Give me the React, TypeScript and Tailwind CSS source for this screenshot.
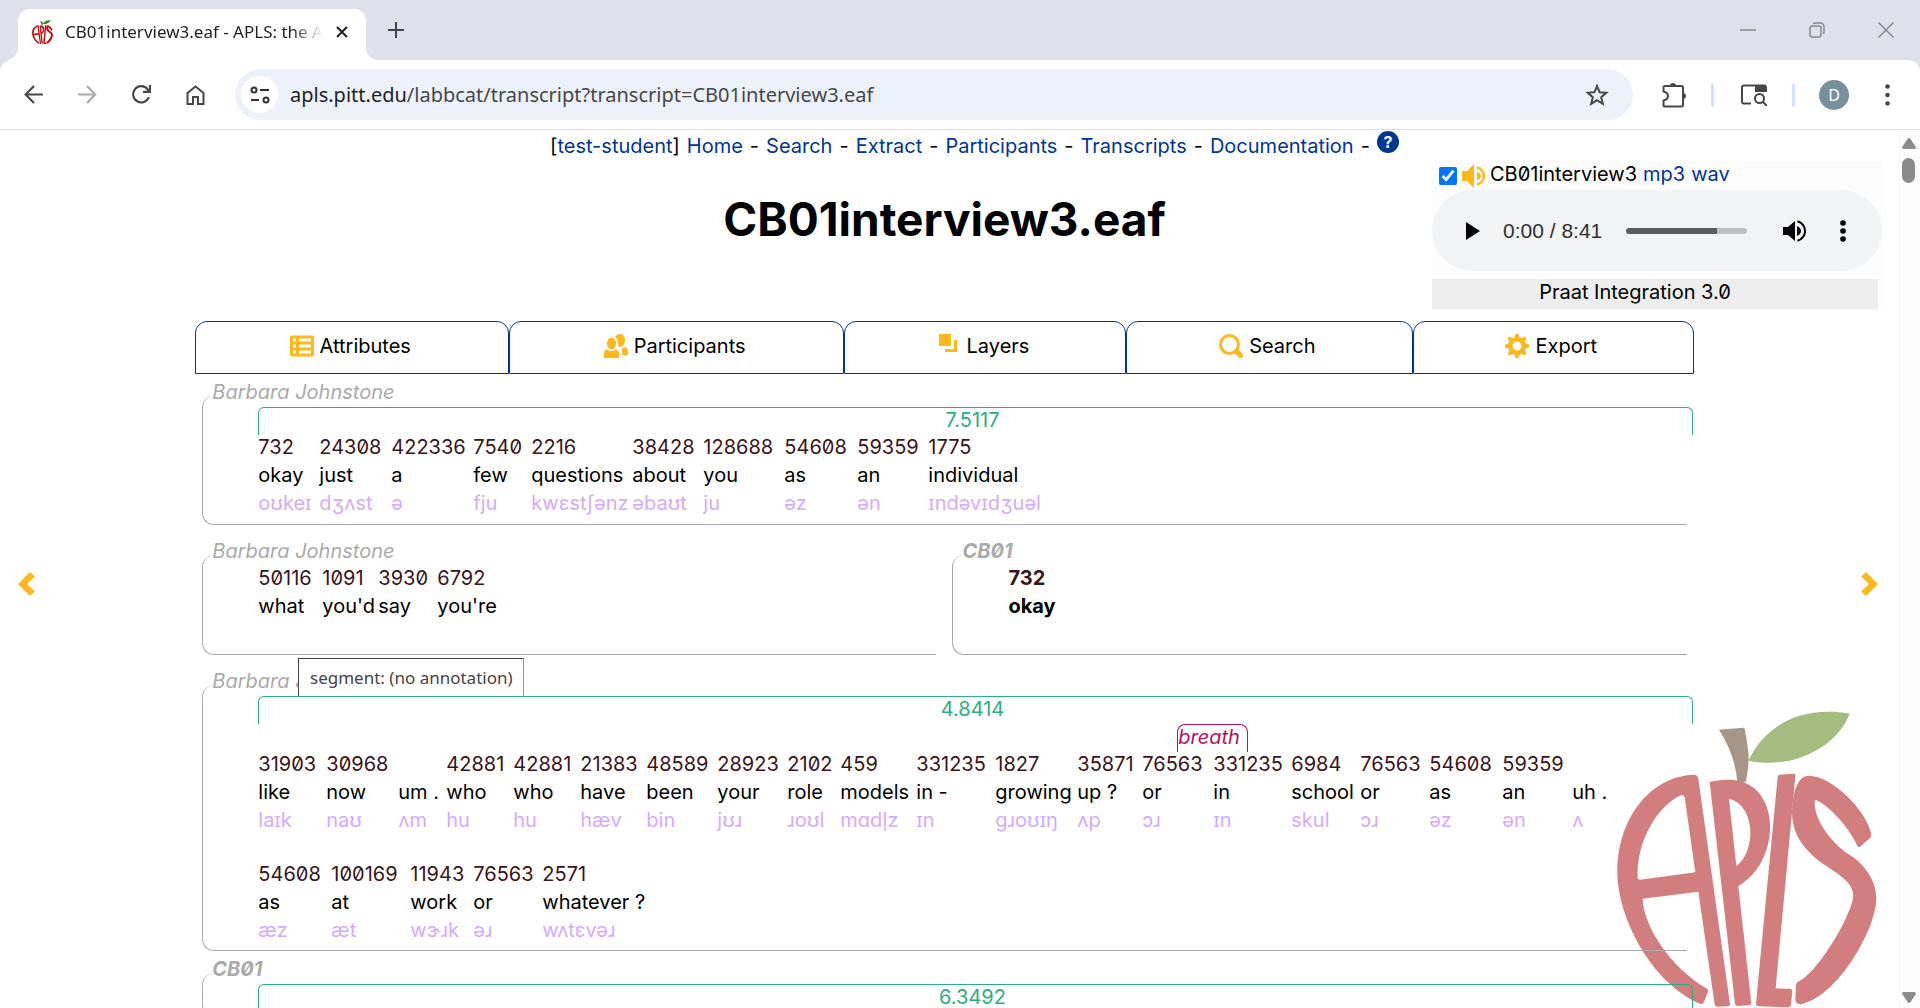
import React from "react";

type Word = { w: number; freq?: string; text: string; ipa?: string };

const TURN_ONE: Word[] = [
  { w: 61, freq: "732", text: "okay", ipa: "oʊkeɪ" },
  { w: 72, freq: "24308", text: "just", ipa: "dʒʌst" },
  { w: 82, freq: "422336", text: "a", ipa: "ə" },
  { w: 58, freq: "7540", text: "few", ipa: "fju" },
  { w: 101, freq: "2216", text: "questions", ipa: "kwɛstʃənz" },
  { w: 71, freq: "38428", text: "about", ipa: "əbaʊt" },
  { w: 81, freq: "128688", text: "you", ipa: "ju" },
  { w: 73, freq: "54608", text: "as", ipa: "əz" },
  { w: 71, freq: "59359", text: "an", ipa: "ən" },
  { w: 118, freq: "1775", text: "individual", ipa: "ɪndəvɪdʒuəl" },
];

const TURN_TWO: Word[] = [
  { w: 64, freq: "50116", text: "what" },
  { w: 56, freq: "1091", text: "you'd" },
  { w: 59, freq: "3930", text: "say" },
  { w: 59, freq: "6792", text: "you're" },
];

const TURN_THREE_A: Word[] = [
  { w: 68, freq: "31903", text: "like", ipa: "laɪk" },
  { w: 72, freq: "30968", text: "now", ipa: "naʊ" },
  { w: 48, text: "um .", ipa: "ʌm" },
  { w: 67, freq: "42881", text: "who", ipa: "hu" },
  { w: 67, freq: "42881", text: "who", ipa: "hu" },
  { w: 66, freq: "21383", text: "have", ipa: "hæv" },
  { w: 71, freq: "48589", text: "been", ipa: "bin" },
  { w: 70, freq: "28923", text: "your", ipa: "jʊɹ" },
  { w: 53, freq: "2102", text: "role", ipa: "ɹoʊl" },
  { w: 76, freq: "459", text: "models", ipa: "mɑdl̩z" },
  { w: 79, freq: "331235", text: "in -", ipa: "ɪn" },
  { w: 82, freq: "1827", text: "growing", ipa: "ɡɹoʊɪŋ" },
  { w: 65, freq: "35871", text: "up ?", ipa: "ʌp" },
  { w: 71, freq: "76563", text: "or", ipa: "ɔɹ" },
  { w: 78, freq: "331235", text: "in", ipa: "ɪn" },
  { w: 69, freq: "6984", text: "school", ipa: "skul" },
  { w: 69, freq: "76563", text: "or", ipa: "ɔɹ" },
  { w: 73, freq: "54608", text: "as", ipa: "əz" },
  { w: 70, freq: "59359", text: "an", ipa: "ən" },
  { w: 36, text: "uh .", ipa: "ʌ" },
];

const TURN_THREE_B: Word[] = [
  { w: 73, freq: "54608", text: "as", ipa: "æz" },
  { w: 79, freq: "100169", text: "at", ipa: "æt" },
  { w: 63, freq: "11943", text: "work", ipa: "wɝɹk" },
  { w: 69, freq: "76563", text: "or", ipa: "əɹ" },
  { w: 105, freq: "2571", text: "whatever ?", ipa: "wʌtɛvəɹ" },
];

function Words({ words, bold = false }: { words: Word[]; bold?: boolean }) {
  return (
    <div className={bold ? "flex whitespace-nowrap font-bold" : "flex whitespace-nowrap"}>
      {words.map((word, i) => (
        <div key={i} className="flex shrink-0 flex-col leading-7" style={{ width: word.w }}>
          <span className="h-7 text-[#3a1420]">{word.freq}</span>
          <span className="h-7 text-black">{word.text}</span>
          <span className="h-7 text-[#d5aaff]">{word.ipa}</span>
        </div>
      ))}
    </div>
  );
}

function Span({ value }: { value: string }) {
  return (
    <div className="-mr-1.5 h-[26px]">
      <div className="h-7 rounded-t-md border border-b-0 border-[#2aaf80] pr-1.5 text-center leading-6 text-[#2aaf80]">{value}</div>
    </div>
  );
}

function Turn({ speaker, bold = false, gap = "mt-3.5", pad = "pt-[11px] pb-1.5", children }: { speaker: string; bold?: boolean; gap?: string; pad?: string; children: React.ReactNode }) {
  return (
    <section className={gap}>
      <h2 className={bold ? "h-6 pl-2.5 font-bold italic leading-6 text-[#aaa]" : "h-6 pl-2.5 italic leading-6 text-[#aaa]"}>{speaker}</h2>
      <div className={"-mt-2 rounded-l-xl border-b border-l border-[#a9a9a9] pl-[55px] " + pad}>{children}</div>
    </section>
  );
}

function AppleLogo({ className, vivid = false }: { className: string; vivid?: boolean }) {
  const red = vivid ? "#c00d0d" : "#d37e7e";
  return (
    <svg viewBox="170 90 780 894" className={className} aria-hidden="true">
      <path fill={vivid ? "#5b3a22" : "#a79587"} d="M476 149L548 143Q552 143 553 147Q565 205 565 240Q563 275 557 303Q556 307 551 307L531 307Q525 225 476 149Z" />
      <path fill={vivid ? "#4d8a12" : "#a3bd81"} d="M564 242C610 145 710 75 868 101C830 200 700 270 564 242Z" />
      <path fill={red} fillRule="evenodd" d="M400 284Q412 284 414 296L509 972Q510 978 502 979L470 980Q464 980 463 973L414 635L247 656C250 740 330 860 438 925Q445 928 443 934L431 966Q427 975 418 971C270 905 171 710 171 575C171 420 265 290 400 284ZM362 346C295 375 228 480 232 592Q232 600 240 599L405 577L373 352Q371 344 362 346Z" />
      <path fill={red} fillRule="evenodd" d="M448 306C540 285 590 315 615 370C650 450 620 570 534 618L573 969Q573 976 566 976L532 978Q525 978 524 971ZM506 356L528 559C590 510 585 375 506 356Z" />
      <path fill={red} d="M657 284L699 281Q706 281 705 289L646 925L690 926Q697 927 696 935L692 974Q690 982 682 982L594 979Q586 978 587 970L652 291Q653 285 657 284Z" />
      <path fill={red} d="M745 287C815 287 918 390 933 462Q934 469 929 474L899 500Q894 503 891 497C860 430 800 375 767 359Q763 360 763 368C763 420 810 485 865 523C915 553 948 605 948 655C948 745 835 945 728 971Q705 976 705 958L707 914Q708 907 716 904C775 875 878 700 879 645C876 590 790 565 750 520C715 485 695 445 695 395C697 330 715 287 745 287Z" />
    </svg>
  );
}

const tabIcons: Record<string, React.ReactNode> = {
  Attributes: (
    <svg viewBox="0 0 24 24" className="size-6 fill-[#ffb81c]">
      <path fillRule="evenodd" d="M2 1.500h20q2 0 2 2v17q0 2-2 2H2q-2 0-2-2v-17q0-2 2-2zM3 4.500v3h3v-3zm6 0v3h12v-3zM3 10.500v3h3v-3zm6 0v3h12v-3zM3 16.500v3h3v-3zm6 0v3h12v-3z" />
    </svg>
  ),
  Participants: (
    <svg viewBox="0 0 24 24" className="size-6 fill-[#ffb81c]">
      <ellipse cx="7.500" cy="9.500" rx="4.500" ry="6" />
      <path d="M0 24v-5q0-3 3-3.500q4 3 9 0q3 .5 3 3.500v5z" />
      <path d="M11 3q2-3.500 6-3q4 1 4 6q0 5-4 7q-2 0-3-1q1-6-3-9zM17 15q2 0 3-2q4 1 4 3v5h-6q1-4-1-6z" />
    </svg>
  ),
  Layers: (
    <svg viewBox="0 0 24 24" className="size-6 fill-[#ffb81c]">
      <path d="M2 0h12v12H2zM17 6h3v12H8v-3h9z" />
    </svg>
  ),
  Search: (
    <svg viewBox="0 0 24 24" className="size-6 fill-none stroke-[#ffb81c]">
      <circle cx="10.500" cy="10.500" r="9" strokeWidth="3" />
      <path d="M17.500 17.500l4 4" strokeWidth="5" strokeLinecap="round" />
    </svg>
  ),
  Export: (
    <svg viewBox="0 0 24 24" className="size-6 fill-[#ffb81c]">
      <path fillRule="evenodd" d="M9.500 3.300L10.500 0h3l1 3.300l2 .9l3-1.700l2 2l-1.700 3l.9 2l3.300 1v3l-3.300 1l-.9 2l1.700 3l-2 2l-3-1.700l-2 .9l-1 3.300h-3l-1-3.300l-2-.9l-3 1.700l-2-2l1.700-3l-.9-2L0 13.500v-3l3.300-1l.9-2l-1.700-3l2-2l3 1.700zM12 7.500a4.500 4.500 0 1 0 0 9a4.500 4.500 0 1 0 0-9z" />
    </svg>
  ),
};

function BrowserChrome() {
  return (
    <header className="shrink-0 bg-[#dee1e9] font-['Noto_Sans',sans-serif]">
      <div className="flex h-[60px] items-end justify-between">
        <div className="flex items-end pl-1">
          <svg viewBox="0 0 14 14" className="size-3.5 fill-white"><path d="M14 0v14H0Q14 14 14 0z" /></svg>
          <div className="flex h-[51px] w-[348px] items-center rounded-t-xl bg-white pb-1.5 pl-3.5 pr-[18px]">
            <AppleLogo vivid className="h-6 w-[21px] shrink-0" />
            <div className="ml-3 whitespace-nowrap text-[17px] text-[#1f1f1f] [mask-image:linear-gradient(to_right,black_88%,transparent_100%)]">CB01interview3.eaf - APLS: the A</div>
            <button aria-label="Close tab" className="ml-auto">
              <svg viewBox="0 0 12 12" className="size-3 stroke-[#1f1f1f]" strokeWidth="2"><path d="M1 1l10 10M11 1L1 11" /></svg>
            </button>
          </div>
          <svg viewBox="0 0 14 14" className="size-3.5 fill-white"><path d="M0 0v14h14Q0 14 0 0z" /></svg>
          <button aria-label="New tab" className="mb-[22px] ml-2">
            <svg viewBox="0 0 16 16" className="size-4 stroke-[#444]" strokeWidth="2"><path d="M8 0v16M0 8h16" /></svg>
          </button>
        </div>
        <div className="mb-[22px] flex items-center gap-[53px] pr-[26px]">
          <button aria-label="Minimize"><svg viewBox="0 0 16 16" className="size-4 stroke-[#888]" strokeWidth="1.500"><path d="M0 8h16" /></svg></button>
          <button aria-label="Restore"><svg viewBox="0 0 16 16" className="size-4 fill-none stroke-[#888]" strokeWidth="1.500"><rect x="1" y="4" width="11" height="11" rx="2" /><path d="M4 1.500Q5 1 7 1h4q4 0 4 4v4q0 2-.6 3" /></svg></button>
          <button aria-label="Close"><svg viewBox="0 0 16 16" className="size-4 stroke-[#888]" strokeWidth="1.500"><path d="M.5.5l15 15M15.500.5l-15 15" /></svg></button>
        </div>
      </div>
      <div className="flex h-[70px] items-center rounded-t-xl border-b border-[#dcdcdc] bg-white pl-6 pr-[30px]">
        <div className="flex items-center gap-[35px]">
          <button aria-label="Back"><svg viewBox="0 0 18 18" className="size-[19px] fill-none stroke-[#474747]" strokeWidth="2"><path d="M18 9H1.500M9.500 1L1.500 9l8 8" /></svg></button>
          <button aria-label="Forward"><svg viewBox="0 0 18 18" className="size-[19px] fill-none stroke-[#aaa]" strokeWidth="2"><path d="M0 9h16.500M8.500 1l8 8l-8 8" /></svg></button>
          <button aria-label="Reload"><svg viewBox="0 0 18 18" className="size-[19px] fill-none stroke-[#474747]" strokeWidth="2"><path d="M16 11.500A7.700 7.700 0 1 1 14.800 4L17 6.200M17 0v6.500h-6.500" /></svg></button>
          <button aria-label="Home"><svg viewBox="0 0 18 20" className="h-5 w-[19px] fill-none stroke-[#474747]" strokeWidth="2"><path d="M1 8L9 1.500L17 8v11h-5.500v-7h-5v7H1z" /></svg></button>
        </div>
        <div className="ml-[30px] flex h-[51px] min-w-0 flex-1 items-center rounded-full bg-[#ecf1fa] pl-1.5 pr-6">
          <button aria-label="Site information" className="flex size-[37px] shrink-0 items-center justify-center rounded-full bg-white">
            <svg viewBox="0 0 20 18" className="h-[18px] w-5 fill-none stroke-[#303030]" strokeWidth="2"><circle cx="4" cy="4" r="2.500" /><path d="M10 4h9M1 14h8" /><circle cx="16" cy="14" r="2.500" /></svg>
          </button>
          <div className="ml-3 flex-1 text-[20px] text-[#474747]"><span className="text-[#1f1f1f]">apls.pitt.edu</span>/labbcat/transcript?transcript=CB01interview3.eaf</div>
          <button aria-label="Bookmark"><svg viewBox="0 0 24 24" className="size-6 fill-none stroke-[#474747]" strokeWidth="2"><path d="M12 3l2.600 6.300l6.700.5l-5.100 4.400l1.600 6.600L12 17.200l-5.800 3.600l1.600-6.600l-5.100-4.400l6.700-.5z" /></svg></button>
        </div>
        <div className="ml-[29px] flex items-center">
          <button aria-label="Extensions"><svg viewBox="0 0 25 26" className="h-[26px] w-[25px] fill-none stroke-[#474747]" strokeWidth="2"><path d="M1.500 5Q1.500 4 3 4h16.500q1.500 0 1.500 1.500V23q0 1.500-1.500 1.500H3q-1.500 0-1.500-1.500v-4.500Q6 17.500 6 14t-4.500-4.500z" /><path className="fill-[#474747] stroke-none" d="M8 4a3 3 0 0 1 6 0zM21 11a3 3 0 0 1 0 6z" /></svg></button>
          <span className="ml-6 h-6 w-[3px] rounded-full bg-[#d3e3fd]" />
          <button aria-label="Search this page" className="ml-[27px]"><svg viewBox="0 0 26 22" className="h-[22px] w-[26px] fill-none stroke-[#474747]" strokeWidth="2"><path d="M10 19.500H3q-2 0-2-2v-14Q1 1.500 3 1.500h20q2 0 2 2V8M21.500 17.500L26 22" /><path className="fill-[#474747] stroke-none" d="M14 1h11v7H14z" /><circle cx="18.500" cy="14.500" r="4.500" /></svg></button>
          <span className="ml-[25px] h-6 w-[3px] rounded-full bg-[#d3e3fd]" />
          <button aria-label="Profile" className="ml-6 flex size-[30px] items-center justify-center rounded-full bg-[#78909c] text-base text-white">D</button>
          <button aria-label="Menu" className="ml-9"><svg viewBox="0 0 5 22" className="h-[22px] w-[5px] fill-[#474747]"><circle cx="2.500" cy="2.500" r="2.300" /><circle cx="2.500" cy="11" r="2.300" /><circle cx="2.500" cy="19.500" r="2.300" /></svg></button>
        </div>
      </div>
    </header>
  );
}

function MediaPanel() {
  return (
    <aside className="absolute right-[15px] top-[31px] w-[450px] bg-[#fcfcfc] pb-px">
      <div className="flex h-[29px] items-center pl-[7px]">
        <input id="media" type="checkbox" defaultChecked className="size-[18px] accent-[#0075ff]" />
        <svg viewBox="0 0 24 24" className="ml-[5px] size-6 fill-[#ffb81c]"><path d="M0 7h5L12 0v24L5 17H0zM15 8q4 1 4 4t-4 4z" /><path d="M15 3.500a8.700 8.700 0 0 1 0 17" fill="none" stroke="#ffb81c" strokeWidth="2.500" /></svg>
        <div className="flex gap-1.5 pb-1 pl-1 leading-6">
          <label htmlFor="media">CB01interview3</label>
          <a href="#mp3" className="text-[#003594]">mp3</a>
          <a href="#wav" className="text-[#003594]">wav</a>
        </div>
      </div>
      <div className="flex h-[81px] items-center rounded-full bg-[#f1f3f4] pl-[34px] pr-9 font-['Liberation_Sans',sans-serif] text-[#303030]">
        <button aria-label="Play"><svg viewBox="0 0 14 18" className="h-[18px] w-3.5 fill-black"><path d="M0 0l14 9l-14 9z" /></svg></button>
        <span className="ml-[23px] text-[21px]">0:00 / 8:41</span>
        <input type="range" aria-label="Volume" defaultValue={75} className="ml-auto mr-9 h-1.5 w-[121px] appearance-none rounded-full bg-linear-to-r from-[#5a5a5a] from-75% to-[#c0c0c0] to-75% [&::-webkit-slider-thumb]:size-0 [&::-webkit-slider-thumb]:appearance-none" />
        <button aria-label="Mute"><svg viewBox="0 0 24 22" className="h-[22px] w-6 fill-black"><path d="M0 7h5l7-6v20l-7-6H0zM14 6q4 2 4 5t-4 5z" /><path d="M14.500 1.300a10 10 0 0 1 0 19.400" fill="none" stroke="#000" strokeWidth="2" /></svg></button>
        <button aria-label="More options" className="ml-[33px]"><svg viewBox="0 0 6 22" className="h-[22px] w-1.5"><circle cx="3" cy="3" r="2.800" /><circle cx="3" cy="11" r="2.800" /><circle cx="3" cy="19" r="2.800" /></svg></button>
      </div>
      <div className="mr-1 mt-2 h-[30px] bg-[#ededed] pr-10 text-center leading-[26px]">Praat Integration 3.0</div>
    </aside>
  );
}

export default function App() {
  return (
    <div className="flex h-screen flex-col overflow-hidden bg-white">
      <BrowserChrome />
      <div className="flex min-h-0 flex-1">
        <main className="relative min-w-0 flex-1 overflow-hidden pl-2 pr-4 font-['Inter','Noto_Sans',sans-serif] text-[20px] text-black [font-feature-settings:'zero']">
          <AppleLogo className="absolute bottom-0 right-5 w-[260px]" />
          <div className="relative">
            <nav className="flex h-8 items-center justify-center gap-[7px] whitespace-nowrap pl-[60px]">
              <span>[<a href="#user" className="text-[#003594]">test-student</a>]</span>
              {["Home", "Search", "Extract", "Participants", "Transcripts", "Documentation"].map((item) => (
                <React.Fragment key={item}>
                  <a href={"#" + item} className="text-[#003594]">{item}</a>
                  {" "}<span>-</span>
                </React.Fragment>
              ))}
              <a href="#help" aria-label="Help" className="mb-2 flex size-[22px] items-center justify-center rounded-full bg-[#003594] text-base font-bold text-white">?</a>
            </nav>
            <h1 className="mt-[31px] text-center text-[46px] font-bold leading-[52px] [font-feature-settings:'zero'_0]">CB01interview3.eaf</h1>
            <div className="mx-auto mt-[76px] w-4/5">
              <nav className="grid grid-cols-[314fr_335fr_282fr_287fr_281fr]">
                {Object.keys(tabIcons).map((tab) => (
                  <button key={tab} className="flex h-[53px] justify-center gap-1.5 rounded-t-xl border border-[#003594] pr-1 pt-3">
                    {tabIcons[tab]}
                    <span className="leading-6">{tab}</span>
                  </button>
                ))}
              </nav>
              <div className="mx-[7px]">
                <Turn speaker="Barbara Johnstone" gap="mt-1.5" pad="pt-[11px] pb-[7px]">
                  <Span value="7.5117" />
                  <Words words={TURN_ONE} />
                </Turn>
                <div className="grid grid-cols-2 gap-4">
                  <Turn speaker="Barbara Johnstone" pad="pt-[9px] pb-1.5"><Words words={TURN_TWO} /></Turn>
                  <Turn speaker="CB01" bold pad="pt-[9px] pb-1.5"><Words bold words={[{ w: 60, freq: "732", text: "okay" }]} /></Turn>
                </div>
                <div className="relative">
                  <Turn speaker="Barbara Johnstone">
                    <Span value="4.8414" />
                    <div className="flex h-7 pl-[919px] pt-0.5">
                      <div className="h-7 w-[71px] shrink-0 rounded-t-lg border border-b-0 border-[#b70f5a] italic leading-6 text-[#b70f5a]">breath</div>
                    </div>
                    <Words words={TURN_THREE_A} />
                    <div className="pt-[26px]"><Words words={TURN_THREE_B} /></div>
                  </Turn>
                  <div role="tooltip" className="absolute -top-[11px] left-[96px] h-[38px] w-[226px] border border-b-0 border-[#444] border-r-[#999] bg-white text-center font-['Noto_Sans',sans-serif] text-[17px] leading-[37px] text-[#444]">segment: (no annotation)</div>
                </div>
                <Turn speaker="CB01" bold gap="mt-1.5">
                  <Span value="6.3492" />
                </Turn>
              </div>
            </div>
          </div>
          <button aria-label="Previous" className="absolute left-[18px] top-[442px]"><svg viewBox="0 0 17 24" className="h-6 w-[17px] fill-[#ffb81c]"><path d="M12 0l5 4.500L9 12l8 7.500L12 24L0 12z" /></svg></button>
          <button aria-label="Next" className="absolute right-[19px] top-[442px]"><svg viewBox="0 0 17 24" className="h-6 w-[17px] fill-[#ffb81c]"><path d="M5 0L0 4.500L8 12L0 19.500L5 24L17 12z" /></svg></button>
          <MediaPanel />
        </main>
        <div className="flex w-[23px] flex-col items-center justify-between bg-[#fcfcfc] pb-[5px] pt-2">
          <div className="flex flex-col items-center gap-[9px]">
            <svg viewBox="0 0 14 11" className="h-[11px] w-3.5 fill-[#8b8b8b]"><path d="M5.500 1q1.500-2 3 0l5 7.500q1 2.500-1 2.500h-11q-2 0-1-2.500z" /></svg>
            <div className="h-[25px] w-[13px] rounded-full bg-[#8b8b8b]" />
          </div>
          <svg viewBox="0 0 14 11" className="h-[11px] w-3.5 fill-[#8b8b8b]"><path d="M5.500 10q1.500 2 3 0l5-7.500q1-2.500-1-2.500h-11q-2 0-1 2.500z" /></svg>
        </div>
      </div>
    </div>
  );
}
